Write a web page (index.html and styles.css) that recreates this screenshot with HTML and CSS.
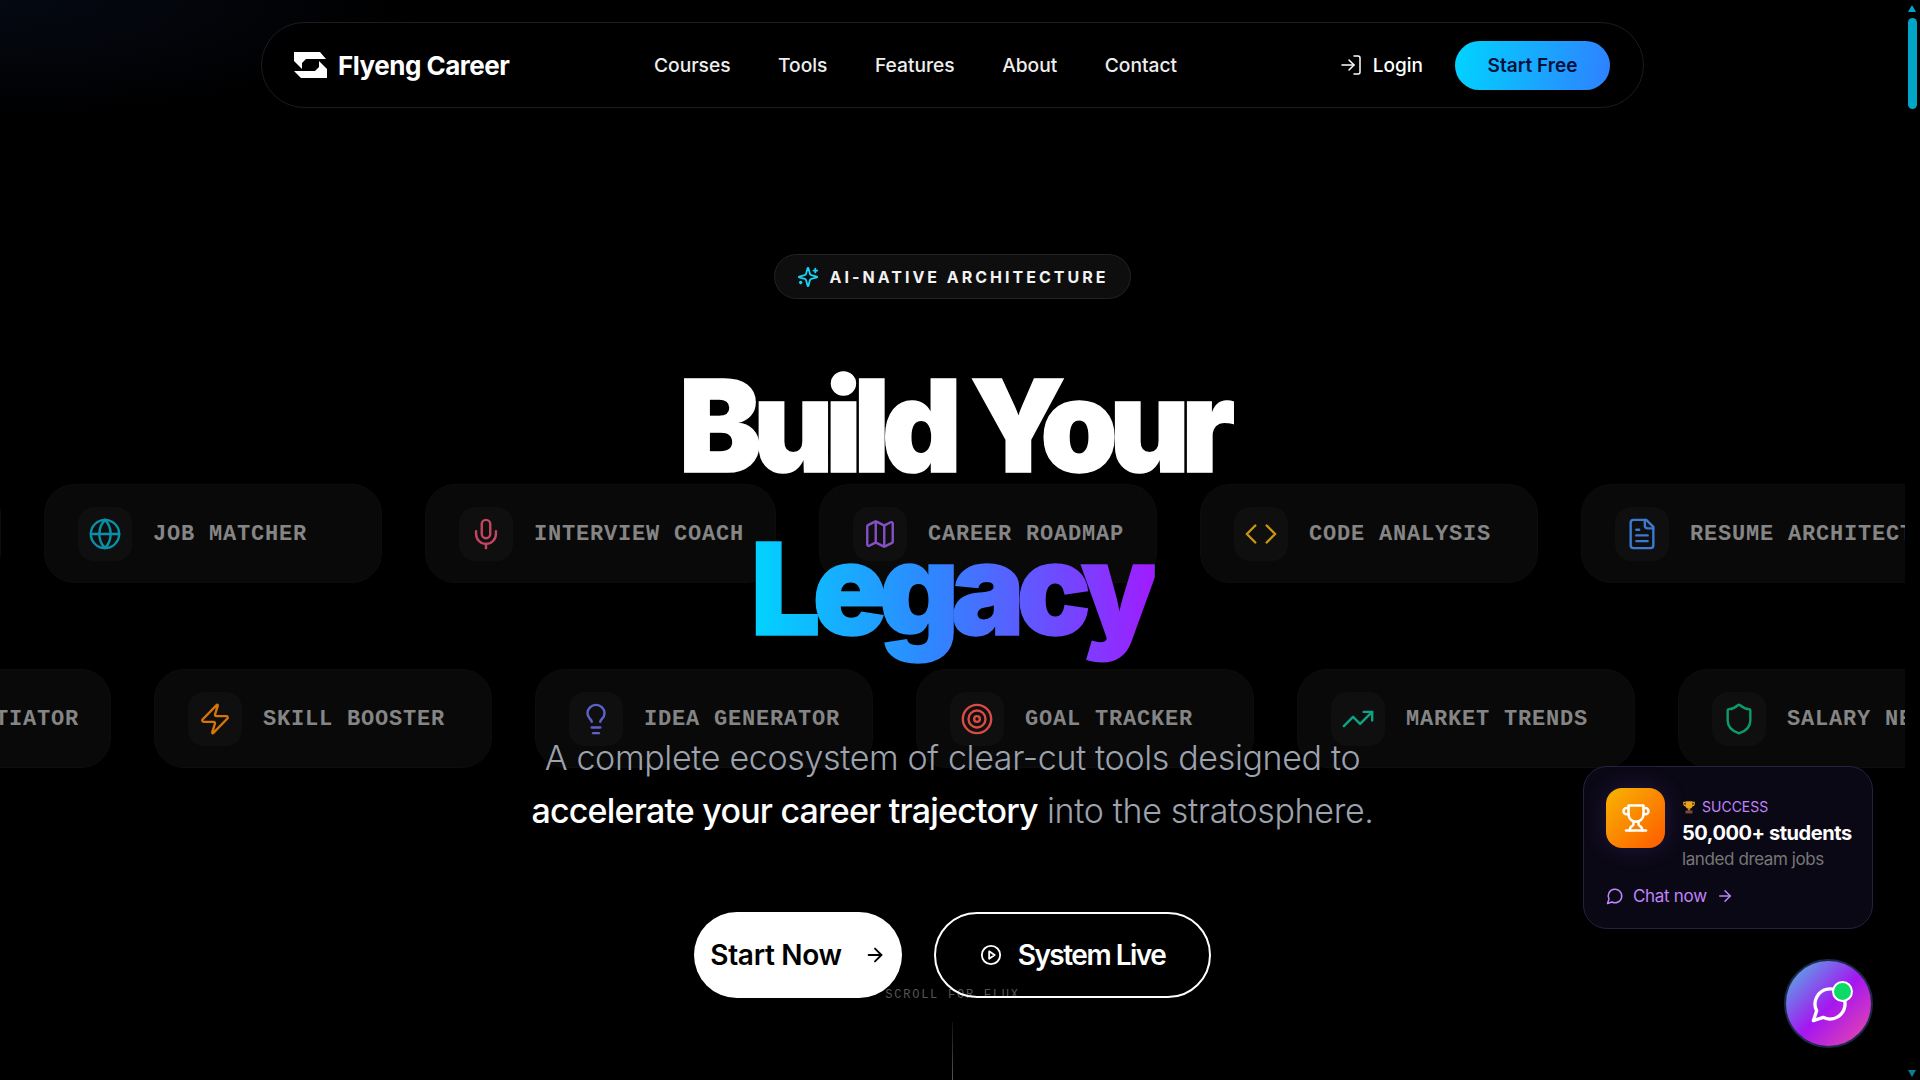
FILE: index.html
```html
<!DOCTYPE html>
<html lang="en">
<head>
    <meta charset="UTF-8">
    <meta name="viewport" content="width=device-width, initial-scale=1.0">
    <title>Flyeng Career</title>
    <link rel="stylesheet" href="styles.css">
</head>
<body>
    <svg class="icon-defs" aria-hidden="true">
        <symbol id="i-globe" viewBox="0 0 24 24"><circle cx="12" cy="12" r="10"/><path d="M12 2a14.5 14.5 0 0 0 0 20 14.5 14.5 0 0 0 0-20"/><path d="M2 12h20"/></symbol>
        <symbol id="i-mic" viewBox="0 0 24 24"><path d="M12 2a3 3 0 0 0-3 3v7a3 3 0 0 0 6 0V5a3 3 0 0 0-3-3Z"/><path d="M19 10v2a7 7 0 0 1-14 0v-2"/><path d="M12 19v3"/></symbol>
        <symbol id="i-map" viewBox="0 0 24 24"><path d="M14.106 5.553a2 2 0 0 0 1.788 0l3.659-1.83A1 1 0 0 1 21 4.619v12.764a1 1 0 0 1-.553.894l-4.553 2.277a2 2 0 0 1-1.788 0l-4.212-2.106a2 2 0 0 0-1.788 0l-3.659 1.83A1 1 0 0 1 3 19.381V6.618a1 1 0 0 1 .553-.894l4.553-2.277a2 2 0 0 1 1.788 0z"/><path d="M15 5.764v15"/><path d="M9 3.236v15"/></symbol>
        <symbol id="i-code" viewBox="0 0 24 24"><path d="m16 18 6-6-6-6"/><path d="m8 6-6 6 6 6"/></symbol>
        <symbol id="i-file" viewBox="0 0 24 24"><path d="M15 2H6a2 2 0 0 0-2 2v16a2 2 0 0 0 2 2h12a2 2 0 0 0 2-2V7Z"/><path d="M14 2v4a2 2 0 0 0 2 2h4"/><path d="M10 9H8"/><path d="M16 13H8"/><path d="M16 17H8"/></symbol>
        <symbol id="i-zap" viewBox="0 0 24 24"><path d="M4 14a1 1 0 0 1-.78-1.63l9.9-10.2a.5.5 0 0 1 .86.46l-1.92 6.02A1 1 0 0 0 13 10h7a1 1 0 0 1 .78 1.63l-9.9 10.2a.5.5 0 0 1-.86-.46l1.92-6.02A1 1 0 0 0 11 14z"/></symbol>
        <symbol id="i-bulb" viewBox="0 0 24 24"><path d="M15 14c.2-1 .7-1.7 1.5-2.5 1-.9 1.5-2.2 1.5-3.5A6 6 0 0 0 6 8c0 1 .2 2.2 1.5 3.5.7.7 1.3 1.5 1.5 2.5"/><path d="M9 18h6"/><path d="M10 22h4"/></symbol>
        <symbol id="i-target" viewBox="0 0 24 24"><circle cx="12" cy="12" r="10"/><circle cx="12" cy="12" r="6"/><circle cx="12" cy="12" r="2"/></symbol>
        <symbol id="i-trend" viewBox="0 0 24 24"><path d="M22 7 13.5 15.5 8.5 10.5 2 17"/><path d="M16 7h6v6"/></symbol>
        <symbol id="i-shield" viewBox="0 0 24 24"><path d="M20 13c0 5-3.5 7.5-7.66 8.95a1 1 0 0 1-.67-.01C7.5 20.5 4 18 4 13V6a1 1 0 0 1 1-1c2 0 4.5-1.2 6.24-2.72a1.17 1.17 0 0 1 1.52 0C14.51 3.81 17 5 19 5a1 1 0 0 1 1 1z"/></symbol>
        <symbol id="i-login" viewBox="0 0 24 24"><path d="M15 3h4a2 2 0 0 1 2 2v14a2 2 0 0 1-2 2h-4"/><path d="m10 17 5-5-5-5"/><path d="M15 12H3"/></symbol>
        <symbol id="i-arrow" viewBox="0 0 24 24"><path d="M5 12h14"/><path d="m12 5 7 7-7 7"/></symbol>
        <symbol id="i-play" viewBox="0 0 24 24"><circle cx="12" cy="12" r="10"/><path d="m10 8 6 4-6 4Z"/></symbol>
        <symbol id="i-chat" viewBox="0 0 24 24"><path d="M7.9 20A9 9 0 1 0 4 16.1L2 22Z"/></symbol>
        <symbol id="i-trophy" viewBox="0 0 24 24"><path d="M6 9H4.5a2.5 2.5 0 0 1 0-5H6"/><path d="M18 9h1.5a2.5 2.5 0 0 0 0-5H18"/><path d="M4 22h16"/><path d="M10 14.66V17c0 .55-.47.98-.97 1.21C7.85 18.75 7 20.24 7 22"/><path d="M14 14.66V17c0 .55.47.98.97 1.21C16.15 18.75 17 20.24 17 22"/><path d="M18 2H6v7a6 6 0 0 0 12 0V2Z"/></symbol>
        <symbol id="i-sparkles" viewBox="0 0 24 24"><path d="M9.937 15.5A2 2 0 0 0 8.5 14.063l-6.135-1.582a.5.5 0 0 1 0-.962L8.5 9.936A2 2 0 0 0 9.937 8.5l1.582-6.135a.5.5 0 0 1 .963 0L14.063 8.5A2 2 0 0 0 15.5 9.937l6.135 1.581a.5.5 0 0 1 0 .964L15.5 14.063a2 2 0 0 0-1.437 1.437l-1.582 6.135a.5.5 0 0 1-.963 0z"/><path d="M20 3v4"/><path d="M22 5h-4"/><path d="M4 17v2"/><path d="M5 18H3"/></symbol>
    </svg>

    <div class="page">
        <main class="main">
            <!-- tool cards behind the hero -->
            <div class="marquee">
                <div class="track track-top">
                    <div class="tool"><span class="tool-icon trend"><svg><use href="#i-trend"/></svg></span><span class="tool-name">MARKET TRENDS</span></div>
                    <div class="tool"><span class="tool-icon globe"><svg><use href="#i-globe"/></svg></span><span class="tool-name">JOB MATCHER</span></div>
                    <div class="tool"><span class="tool-icon mic"><svg><use href="#i-mic"/></svg></span><span class="tool-name">INTERVIEW COACH</span></div>
                    <div class="tool"><span class="tool-icon map"><svg><use href="#i-map"/></svg></span><span class="tool-name">CAREER ROADMAP</span></div>
                    <div class="tool"><span class="tool-icon code"><svg><use href="#i-code"/></svg></span><span class="tool-name">CODE ANALYSIS</span></div>
                    <div class="tool"><span class="tool-icon file"><svg><use href="#i-file"/></svg></span><span class="tool-name">RESUME ARCHITECT</span></div>
                </div>
                <div class="track track-bottom">
                    <div class="tool"><span class="tool-icon shield"><svg><use href="#i-shield"/></svg></span><span class="tool-name">SALARY NEGOTIATOR</span></div>
                    <div class="tool"><span class="tool-icon zap"><svg><use href="#i-zap"/></svg></span><span class="tool-name">SKILL BOOSTER</span></div>
                    <div class="tool"><span class="tool-icon bulb"><svg><use href="#i-bulb"/></svg></span><span class="tool-name">IDEA GENERATOR</span></div>
                    <div class="tool"><span class="tool-icon target"><svg><use href="#i-target"/></svg></span><span class="tool-name">GOAL TRACKER</span></div>
                    <div class="tool"><span class="tool-icon trend"><svg><use href="#i-trend"/></svg></span><span class="tool-name">MARKET TRENDS</span></div>
                    <div class="tool"><span class="tool-icon shield"><svg><use href="#i-shield"/></svg></span><span class="tool-name">SALARY NEGOTIATOR</span></div>
                </div>
            </div>

            <nav class="nav">
                <a class="brand" href="#">
                    <svg class="brand-mark" viewBox="0 0 33 26"><path d="M0 0H26L32 7H12L8 11V17L0 9Z"/><path d="M33 26H7L0 19H21L25 15V9L33 17Z"/></svg>
                    Flyeng Career
                </a>
                <div class="nav-links">
                    <a href="#">Courses</a>
                    <a href="#">Tools</a>
                    <a href="#">Features</a>
                    <a href="#">About</a>
                    <a href="#">Contact</a>
                </div>
                <div class="nav-actions">
                    <a class="login" href="#"><svg class="stroke-icon"><use href="#i-login"/></svg>Login</a>
                    <a class="start-free" href="#">Start Free</a>
                </div>
            </nav>

            <section class="hero">
                <div class="badge"><svg class="stroke-icon"><use href="#i-sparkles"/></svg>AI-NATIVE ARCHITECTURE</div>
                <h1 class="title">
                    <span class="title-line">Build Your</span>
                    <span class="title-line"><span class="title-accent">Legacy</span></span>
                </h1>
                <p class="lead">
                    A complete ecosystem of clear-cut tools designed to<br>
                    <strong>accelerate your career trajectory</strong> into the stratosphere.
                </p>
                <div class="cta-row">
                    <a class="cta cta-solid" href="#">Start Now<svg class="stroke-icon"><use href="#i-arrow"/></svg></a>
                    <a class="cta cta-outline" href="#"><svg class="stroke-icon"><use href="#i-play"/></svg>System Live</a>
                </div>
            </section>

            <div class="scroll-hint">
                <span>SCROLL FOR FLUX</span>
                <i class="scroll-line"></i>
            </div>

            <div class="success-card">
                <div class="success-top">
                    <div class="success-icon"><svg class="stroke-icon"><use href="#i-trophy"/></svg></div>
                    <div>
                        <div class="success-tag">
                            <svg class="mini-trophy" viewBox="0 0 24 24"><path d="M6 2h12v7a6 6 0 0 1-12 0Z" fill="#e8a21c"/><path d="M6 4H3v2a4 4 0 0 0 4 4M18 4h3v2a4 4 0 0 1-4 4" fill="none" stroke="#e8a21c" stroke-width="2"/><path d="M10 14h4v4h-4Z" fill="#c9851a"/><path d="M6 18h12v5H6Z" fill="#7a4a3a"/></svg>
                            SUCCESS
                        </div>
                        <div class="success-title">50,000+ students</div>
                        <div class="success-sub">landed dream jobs</div>
                    </div>
                </div>
                <a class="success-link" href="#"><svg class="stroke-icon"><use href="#i-chat"/></svg>Chat now<svg class="stroke-icon"><use href="#i-arrow"/></svg></a>
            </div>

            <button class="chat-fab">
                <svg class="stroke-icon"><use href="#i-chat"/></svg>
                <i class="chat-dot"></i>
            </button>
        </main>

        <!-- custom scrollbar -->
        <aside class="scrollbar">
            <i class="scroll-arrow up"></i>
            <i class="scroll-thumb"></i>
            <i class="scroll-arrow down"></i>
        </aside>
    </div>
</body>
</html>
```

FILE: styles.css
```css
* {
    box-sizing: border-box;
}

body {
    margin: 0;
    background: #000;
    color: #fff;
    font-family: Inter, "Noto Sans", sans-serif;
    overflow: hidden;
}

a {
    color: inherit;
    text-decoration: none;
}

.icon-defs {
    display: none;
}

.stroke-icon,
.tool-icon svg {
    fill: none;
    stroke: currentColor;
    stroke-width: 2;
    stroke-linecap: round;
    stroke-linejoin: round;
    flex-shrink: 0;
}

.page {
    display: flex;
    height: 1080px;
}

.main {
    position: relative;
    flex: 1;
    height: 1080px;
    overflow: hidden;
    background: radial-gradient(420px 120px at 0 0, #050913, transparent);
}

/* tool cards */
.marquee {
    position: absolute;
    top: 484px;
    left: 0;
    right: 0;
    display: flex;
    flex-direction: column;
    gap: 86px;
    overflow: hidden;
}

.track {
    display: flex;
    gap: 43px;
    width: max-content;
}

.track-top {
    margin-left: -337px;
}

.track-bottom {
    margin-left: -268px;
}

.tool {
    display: flex;
    align-items: center;
    gap: 21px;
    min-width: 338px;
    height: 99px;
    padding: 0 31px 0 33px;
    background: #090909;
    border: 1px solid #0d0d0d;
    border-radius: 30px;
    color: #858585;
    font-family: "Liberation Mono", monospace;
    font-size: 22px;
    font-weight: 700;
    letter-spacing: 0.8px;
    white-space: nowrap;
}

.tool-name {
    margin-top: 2px;
}

.tool-icon {
    display: flex;
    align-items: center;
    justify-content: center;
    width: 54px;
    height: 54px;
    background: #0f0f0f;
    border-radius: 16px;
}

.tool-icon svg {
    width: 34px;
    height: 34px;
    stroke-width: 1.7;
}

.globe { color: #0891a8; }
.mic { color: #c4455f; }
.map { color: #8550c4; }
.code { color: #c9960c; }
.file { color: #3b7ad0; }
.zap { color: #d4740a; }
.bulb { color: #6062cc; }
.target { color: #d84c44; }
.trend { color: #0ea383; }
.shield { color: #0c9c68; }

/* nav */
.nav {
    position: relative;
    display: flex;
    align-items: center;
    width: 1383px;
    height: 86px;
    margin: 22px auto 0;
    padding: 0 33px 0 32px;
    border: 1px solid #1c1c1c;
    border-radius: 43px;
    background: rgba(0, 0, 0, 0.6);
}

.brand {
    display: flex;
    align-items: center;
    gap: 11px;
    width: 360px;
    font-size: 26px;
    font-weight: 700;
    letter-spacing: -0.5px;
}

.brand-mark {
    width: 33px;
    height: 26px;
    fill: #fff;
}

.nav-links {
    display: flex;
    gap: 47.5px;
    font-size: 19.2px;
    font-weight: 500;
    color: #eee;
}

.nav-actions {
    display: flex;
    align-items: center;
    gap: 32px;
    margin-left: auto;
    font-size: 19px;
    font-weight: 500;
}

.login {
    display: flex;
    align-items: center;
    gap: 10px;
}

.login svg {
    width: 24px;
    height: 24px;
    stroke-width: 1.5;
}

.start-free {
    display: flex;
    align-items: center;
    justify-content: center;
    width: 155px;
    height: 49px;
    border-radius: 25px;
    background: linear-gradient(100deg, #00d4ff, #2f80ff);
    color: #00113a;
    font-weight: 600;
}

/* hero */
.hero {
    position: relative;
    display: flex;
    flex-direction: column;
    align-items: center;
    margin-top: 146px;
}

.badge {
    display: flex;
    align-items: center;
    gap: 11px;
    height: 45px;
    padding: 0 22px;
    background: #0e0e0e;
    border: 1px solid #222;
    border-radius: 23px;
    font-size: 16px;
    font-weight: 700;
    letter-spacing: 3px;
    color: #f2f2f2;
}

.badge svg {
    width: 22px;
    height: 22px;
    color: #1ad4f7;
}

.title {
    margin: 45px 0 0;
    font-size: 128px;
    font-weight: 900;
    line-height: 163px;
    letter-spacing: -8.5px;
    text-align: center;
    transform: scaleX(0.965);
    -webkit-text-stroke: 1.5px #fff;
}

.title-line {
    display: block;
}

.title-accent {
    display: inline-block;
    padding-right: 4px;
    background: linear-gradient(90deg, #00d4ff, #2f86ff 45%, #a01cff);
    -webkit-background-clip: text;
    background-clip: text;
    color: transparent;
    -webkit-text-stroke: 1.5px transparent;
}

.lead {
    margin: 61px 0 0;
    font-size: 34px;
    font-weight: 300;
    line-height: 53px;
    letter-spacing: -0.35px;
    text-align: center;
    color: #9ca3af;
}

.lead strong {
    font-weight: 500;
    letter-spacing: -0.8px;
    color: #fff;
}

.cta-row {
    display: flex;
    gap: 32px;
    margin-top: 75px;
}

.cta {
    position: relative;
    z-index: 1;
    display: flex;
    align-items: center;
    justify-content: center;
    height: 86px;
    border-radius: 43px;
    font-size: 28px;
    font-weight: 600;
    letter-spacing: -0.3px;
}

.cta svg {
    width: 22px;
    height: 22px;
}

.cta-solid {
    gap: 22px;
    width: 208px;
    background: #fff;
    color: #000;
}

.cta-outline {
    gap: 16px;
    width: 277px;
    border: 2px solid #fff;
    letter-spacing: -1.5px;
}

.scroll-hint {
    position: absolute;
    left: 0;
    right: 0;
    top: 989px;
    display: flex;
    flex-direction: column;
    align-items: center;
    font-family: "Liberation Mono", monospace;
    font-size: 12px;
    line-height: 12px;
    letter-spacing: 1.75px;
    color: #555;
}

.scroll-line {
    width: 1px;
    height: 58px;
    margin-top: 21px;
    background: linear-gradient(#111, #555);
}

/* floating widgets */
.success-card {
    position: absolute;
    right: 32px;
    top: 766px;
    width: 290px;
    height: 163px;
    padding: 21px 22px;
    background: #0b0815;
    border: 1px solid #26213f;
    border-radius: 24px;
}

.success-top {
    display: flex;
    gap: 17px;
}

.success-icon {
    display: flex;
    align-items: center;
    justify-content: center;
    flex-shrink: 0;
    width: 59px;
    height: 60px;
    border-radius: 16px;
    background: linear-gradient(135deg, #f7b500, #ff5a00);
    box-shadow: 0 0 24px rgba(120, 90, 220, 0.2);
}

.success-icon svg {
    width: 30px;
    height: 30px;
}

.success-tag {
    display: flex;
    align-items: center;
    gap: 6px;
    margin-top: 9px;
    font-size: 14px;
    line-height: 20px;
    color: #c084fc;
}

.mini-trophy {
    width: 14px;
    height: 14px;
}

.success-title {
    margin-top: 3px;
    font-size: 20px;
    font-weight: 700;
    line-height: 26px;
    letter-spacing: -0.45px;
    white-space: nowrap;
}

.success-sub {
    margin-top: 1px;
    font-size: 17px;
    line-height: 24px;
    letter-spacing: -0.4px;
    color: #777;
    white-space: nowrap;
}

.success-link {
    display: flex;
    align-items: center;
    gap: 9px;
    margin-top: 15px;
    font-size: 17px;
    letter-spacing: -0.3px;
    color: #c084fc;
}

.success-link svg {
    width: 18px;
    height: 18px;
}

.chat-fab {
    position: absolute;
    right: 32px;
    bottom: 32px;
    display: flex;
    align-items: center;
    justify-content: center;
    width: 89px;
    height: 89px;
    padding: 0 0 0 3px;
    border: 2px solid #1b2a4a;
    border-radius: 50%;
    background: linear-gradient(135deg, #5aa5e6 8%, #a516f0 52%, #e646ac 95%);
    color: #fff;
}

.chat-fab svg {
    width: 40px;
    height: 40px;
    stroke-width: 2;
}

.chat-dot {
    position: absolute;
    top: 20px;
    right: 18px;
    width: 21px;
    height: 21px;
    border: 2px solid #fff;
    border-radius: 50%;
    background: #0cd968;
}

/* scrollbar */
.scrollbar {
    position: relative;
    width: 15px;
    background: #000;
}

.scroll-thumb {
    position: absolute;
    left: 3px;
    top: 18px;
    width: 9px;
    height: 91px;
    border-radius: 5px;
    background: #00a6c8;
}

.scroll-arrow {
    position: absolute;
    left: 3px;
    border-left: 4.5px solid transparent;
    border-right: 4.5px solid transparent;
}

.scroll-arrow.up {
    top: 5px;
    border-bottom: 7px solid #00a6c8;
}

.scroll-arrow.down {
    bottom: 3px;
    border-top: 7px solid #0a7f98;
}
```
